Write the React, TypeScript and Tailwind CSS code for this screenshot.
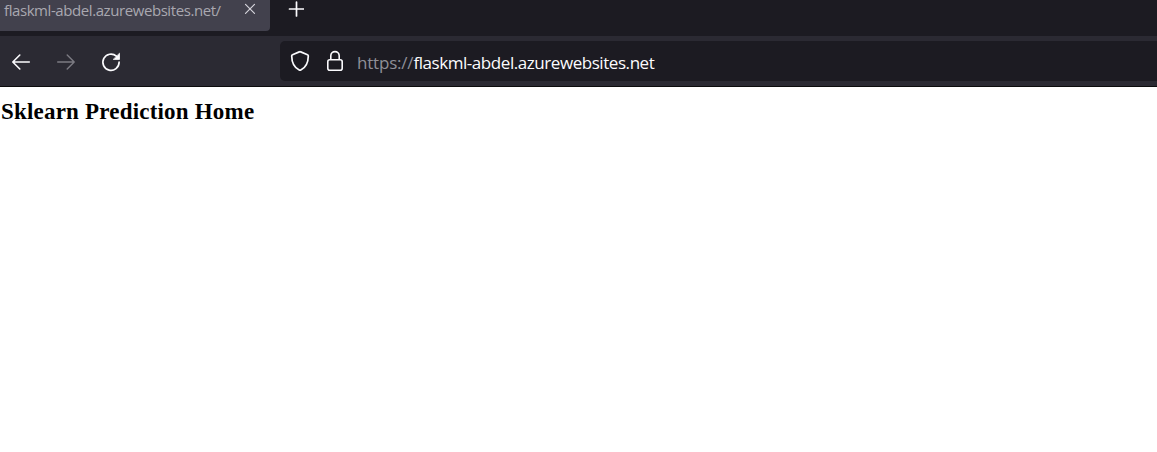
function BackIcon() {
  return (
    <svg width="20" height="20" viewBox="0 0 20 20" fill="none" stroke="currentColor" strokeWidth="1.6" strokeLinecap="round" strokeLinejoin="round">
      <path d="M18.3 10H2M8.8 3 1.8 10 8.8 17" />
    </svg>
  );
}

function ForwardIcon() {
  return (
    <svg width="20" height="20" viewBox="0 0 20 20" fill="none" stroke="currentColor" strokeWidth="1.4" strokeLinecap="round" strokeLinejoin="round">
      <path d="M1.7 10H18M11.2 3 18.2 10 11.2 17" />
    </svg>
  );
}

function ReloadIcon() {
  return (
    <svg width="20" height="20" viewBox="0 0 20 20" fill="none" stroke="currentColor" strokeWidth="1.7" strokeLinecap="round">
      <path d="M18.1 10.2A8.100 8.100 0 1 1 15.400 4.200" />
      <path d="M18.500 1.600V7.400H12.600Z" fill="currentColor" strokeWidth="0.8" strokeLinejoin="round" />
    </svg>
  );
}

function ShieldIcon() {
  return (
    <svg width="20" height="22" viewBox="0 0 20 22" fill="none" stroke="currentColor" strokeWidth="1.7" strokeLinejoin="round">
      <path d="M9.300 1.900Q10 1.500 10.700 1.900L17.500 4.700Q18.300 5 18.300 5.900C18.200 12.500 15.700 17.500 10.800 20Q10 20.400 9.200 20C4.300 17.500 1.800 12.500 1.700 5.900Q1.700 5 2.500 4.700Z" />
    </svg>
  );
}

function LockIcon() {
  return (
    <svg width="18" height="22" viewBox="0 0 18 22" fill="none" stroke="currentColor" strokeWidth="1.6">
      <rect x="1.800" y="9.800" width="14.400" height="10.400" rx="2" />
      <path d="M4.800 9.800V5.800a4.200 4.200 0 0 1 8.400 0V9.800" />
    </svg>
  );
}

export default function App() {
  return (
    <div className="flex h-[452px] w-full flex-col overflow-hidden bg-white">
      <header className="flex h-[36px] shrink-0 items-start bg-[#1c1b22]">
        <div className="flex h-[31px] w-[270px] items-start rounded-br-[4px] bg-[#42414d] pl-1 text-[#a9a8b0]">
          <span className="w-[240px] whitespace-nowrap font-['Open_Sans',sans-serif] text-[15px] leading-[20px] tracking-[-0.42px]">
            flaskml-abdel.azurewebsites.net/
          </span>
          <svg className="mt-[3px] shrink-0" width="12" height="12" viewBox="0 0 12 12" fill="none" stroke="#d5d4dc" strokeWidth="1.2" strokeLinecap="round">
            <path d="M1.500 1.300 10.500 10.300M10.500 1.300 1.500 10.300" />
          </svg>
        </div>
        <svg className="ml-[18px] mt-px" width="16" height="16" viewBox="0 0 16 16" stroke="#fbfbfe" strokeWidth="1.700" strokeLinecap="round">
          <path d="M8.500 1V15M1.500 8H15.500" />
        </svg>
      </header>

      <nav className="flex h-[51px] shrink-0 items-center border-b border-[#0c0c0d] bg-[#2b2a33] text-[#fbfbfe]">
        <div className="flex w-[280px] items-center gap-[25px] pl-[11px] pt-px">
          <BackIcon />
          <span className="text-[#7c7b83]"><ForwardIcon /></span>
          <ReloadIcon />
        </div>
        <div className="flex h-[40px] flex-1 items-center rounded-l-[5px] bg-[#1c1b22] pl-[10px]">
          <ShieldIcon />
          <span className="ml-[16px]"><LockIcon /></span>
          <span className="ml-[13px] whitespace-nowrap pt-[3px] font-['Open_Sans',sans-serif] text-[17px] leading-[22px] tracking-[-0.2px]">
            <span className="text-[#8f8f97]">https://</span>
            <span className="tracking-[-0.44px]">flaskml-abdel.azurewebsites.net</span>
          </span>
        </div>
      </nav>

      <main className="flex-1 bg-white pl-px pt-[11px]">
        <h1 className="font-['Liberation_Serif',serif] text-[23px] font-bold leading-[28px] tracking-[0.2px] text-black">
          Sklearn Prediction Home
        </h1>
      </main>
    </div>
  );
}
